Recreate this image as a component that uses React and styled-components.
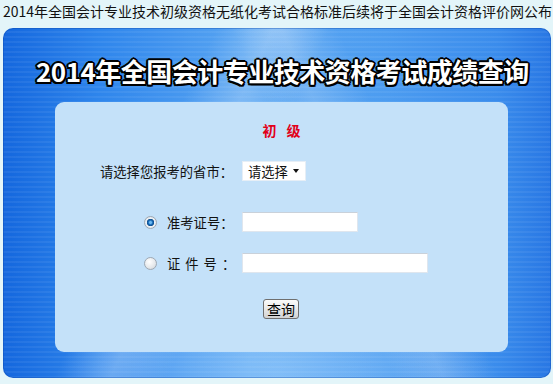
import React from 'react';
import styled, { createGlobalStyle } from 'styled-components';

const GlobalStyle = createGlobalStyle`
  html, body {
    margin: 0;
    padding: 0;
    background: #e3f5f9;
  }
  body {
    font-family: "Noto Sans CJK SC", "Liberation Sans", sans-serif;
  }
`;

const Page = styled.div`
  width: 553px;
  height: 384px;
  background: #e3f5f9;
  overflow: hidden;
`;

const Notice = styled.div`
  height: 28px;
  font-size: 14px;
  line-height: 22px;
  color: #111;
  white-space: nowrap;
  padding-left: 3px;
`;

const Board = styled.div`
  margin-left: 3px;
  width: 548px;
  height: 350px;
  box-sizing: border-box;
  border-radius: 10px;
  padding-top: 28px;
  display: flex;
  flex-direction: column;
  background:
    repeating-linear-gradient(0deg, rgba(255, 255, 255, 0.06) 0 2px, rgba(255, 255, 255, 0) 2px 5px),
    linear-gradient(115deg, rgba(255, 255, 255, 0) 30%, rgba(255, 255, 255, 0.22) 38%, rgba(255, 255, 255, 0) 46%),
    linear-gradient(65deg, rgba(255, 255, 255, 0) 55%, rgba(255, 255, 255, 0.18) 62%, rgba(255, 255, 255, 0) 70%),
    radial-gradient(ellipse at 50% 100%, rgba(180, 220, 255, 0.45), rgba(180, 220, 255, 0) 55%),
    linear-gradient(to right, #1467de 0%, #2f86ec 18%, #5aa6f2 45%, #4c9cf0 70%, #3a8cec 90%, #2877e4 100%);
  box-shadow: inset 0 0 0 1px rgba(10, 70, 170, 0.35);
`;

const Title = styled.h1`
  margin: 0;
  padding-left: 33px;
  height: 32px;
  font-size: 26px;
  line-height: 30px;
  font-weight: 700;
  letter-spacing: -0.5px;
  color: #fff;
  white-space: nowrap;
  text-shadow:
    -1.5px -1.5px 0 #000, 1.5px -1.5px 0 #000, -1.5px 1.5px 0 #000, 1.5px 1.5px 0 #000,
    0 -2px 0 #000, 0 2px 0 #000, -2px 0 0 #000, 2px 0 0 #000;
`;

const Card = styled.div`
  margin: 14px 0 0 52px;
  width: 453px;
  height: 250px;
  box-sizing: border-box;
  border-radius: 9px;
  background: #c4e1f9;
  padding-top: 18px;
  display: flex;
  flex-direction: column;
`;

const Grade = styled.div`
  text-align: center;
  font-size: 14px;
  line-height: 20px;
  font-weight: 700;
  color: #e2001a;
  letter-spacing: 10px;
  padding-left: 10px;
`;

const Row = styled.div`
  display: flex;
  align-items: center;
  height: 20px;
  margin-top: ${(p) => p.$top}px;
`;

const Label = styled.div`
  width: 187px;
  box-sizing: border-box;
  display: flex;
  align-items: center;
  justify-content: ${(p) => (p.$align === 'start' ? 'flex-start' : 'flex-end')};
  padding: ${(p) => (p.$align === 'start' ? '0 0 0 89px' : '0 9px 0 0')};
  font-size: 13.3px;
  color: #111;
  white-space: nowrap;
`;

const Spaced = styled.span`
  letter-spacing: ${(p) => p.$spacing}px;
`;

const Radio = styled.span`
  width: 13px;
  height: 13px;
  margin-right: 10px;
  border-radius: 50%;
  box-sizing: border-box;
  border: 1px solid #9ea8b3;
  background: ${(p) =>
    p.$checked
      ? 'radial-gradient(circle, #6bb8f0 0 1px, #1a6cb8 2.2px, #0d4d8e 3.4px, #eef2f5 4px, #d2d8df 100%)'
      : 'radial-gradient(circle at 40% 35%, #ffffff 0, #e4e7ea 60%, #c9ced4 100%)'};
`;

const Picker = styled.div`
  width: 64px;
  height: 20px;
  box-sizing: border-box;
  background: #fff;
  border: 1px solid #e6eef6;
  display: flex;
  align-items: center;
  justify-content: space-between;
  padding: 0 6px 0 5px;
  font-size: 13.3px;
  color: #111;
`;

const Caret = styled.span`
  width: 0;
  height: 0;
  border-left: 3.5px solid transparent;
  border-right: 3.5px solid transparent;
  border-top: 4px solid #111;
`;

const TextInput = styled.input`
  width: ${(p) => p.$w}px;
  height: 20px;
  box-sizing: border-box;
  margin: 0;
  padding: 0 3px;
  border: 1px solid #dfe6ee;
  border-top-color: #c9d1da;
  background: #fff;
  outline: none;
  font-size: 13px;
`;

const SubmitButton = styled.button`
  align-self: flex-start;
  margin: 26px 0 0 208px;
  width: 36px;
  height: 20px;
  padding: 0;
  box-sizing: border-box;
  border: 1px solid #6f6f6f;
  border-radius: 3px;
  background: linear-gradient(#fbfbfb, #e6e6e6 55%, #d2d2d2);
  font-family: "Noto Sans CJK SC", sans-serif;
  font-size: 14px;
  line-height: 17px;
  color: #000;
`;

export default function App() {
  return (
    <Page>
      <GlobalStyle />
      <Notice>2014年全国会计专业技术初级资格无纸化考试合格标准后续将于全国会计资格评价网公布</Notice>
      <Board>
        <Title>2014年全国会计专业技术资格考试成绩查询</Title>
        <Card>
          <Grade>初级</Grade>
          <Row $top={21}>
            <Label>请选择您报考的省市：</Label>
            <Picker>
              请选择
              <Caret />
            </Picker>
          </Row>
          <Row $top={31}>
            <Label $align="start">
              <Radio $checked />
              准考证号：
            </Label>
            <TextInput $w={116} type="text" />
          </Row>
          <Row $top={21}>
            <Label $align="start">
              <Radio />
              <Spaced $spacing={5}>证件号</Spaced>：
            </Label>
            <TextInput $w={186} type="text" />
          </Row>
          <SubmitButton type="button">查询</SubmitButton>
        </Card>
      </Board>
    </Page>
  );
}
